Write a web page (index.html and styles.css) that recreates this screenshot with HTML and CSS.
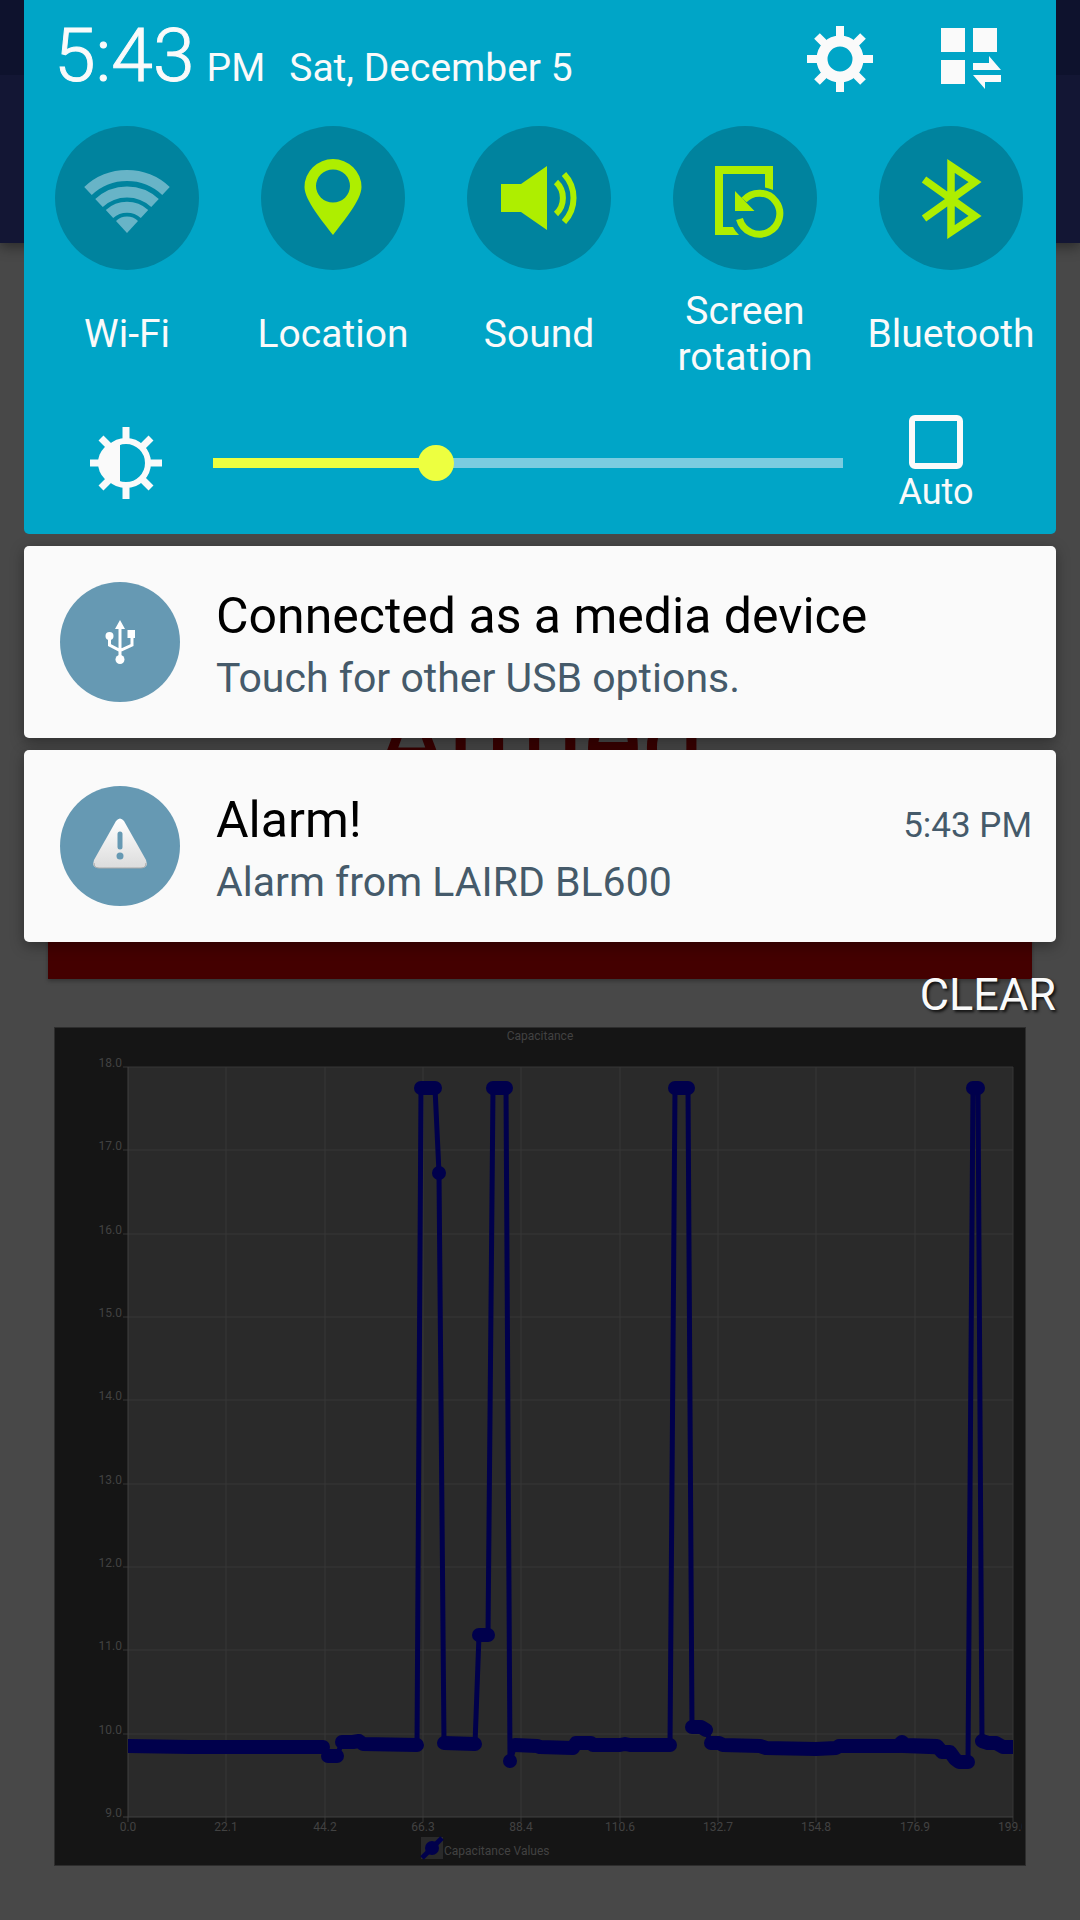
FILE: index.html
```html
<!DOCTYPE html>
<html lang="en">
<head>
<meta charset="utf-8">
<meta name="viewport" content="width=device-width, initial-scale=1">
<title>Capacitance Alarm</title>
<link rel="stylesheet" href="styles.css">
</head>
<body>
<div class="app">
  <header class="app-header">
    <div class="status-bar"></div>
    <div class="toolbar"></div>
  </header>
  <main class="app-main">
    <h1 class="alarm-state">Armed</h1>
    <button class="alarm-button" type="button" aria-label="Alarm"></button>
    <section class="chart">
      <svg class="chart-svg" viewBox="54 1027 972 839" role="img" aria-label="Capacitance">
        <defs>
          <clipPath id="plot-clip"><rect x="128" y="1067" width="885" height="750"/></clipPath>
          <clipPath id="label-clip"><rect x="54" y="1027" width="968" height="839"/></clipPath>
        </defs>
        <rect class="chart-frame" x="54" y="1027" width="972" height="839"/>
        <rect class="plot" x="128" y="1067" width="885" height="750"/>
        <path class="grid" d="M123 1067H1013M123 1150H1013M123 1234H1013M123 1317H1013M123 1400H1013M123 1484H1013M123 1567H1013M123 1650H1013M123 1734H1013M226 1067V1822M325 1067V1822M423 1067V1822M521 1067V1822M620 1067V1822M718 1067V1822M816 1067V1822M915 1067V1822M1013 1067V1822"/>
        <path class="axis" d="M128 1067V1822M123 1817H1013"/>
        <g clip-path="url(#plot-clip)">
          <path class="line" d="M128 1746L323 1747L328 1756L337 1756L342 1742L359 1741L363 1744L417 1745L421 1088L435 1088L439 1173L444 1743L475 1744L479 1635L488 1635L493 1088L506 1088L510 1761L515 1745L573 1748L576 1743L670 1745L675 1088L688 1088L692 1727L706 1730L711 1743L942 1752L968 1762L973 1088L978 1088L982 1741L1013 1747"/>
          <path class="points" d="M128 1746L190 1747H323M328 1756H337M342 1742H353L359 1741L363 1744L417 1745M421 1088H435M439 1173h0M444 1743L475 1744M479 1635H488M493 1088H506M510 1761h0M515 1745L537 1746L540 1747L573 1748L576 1743H591L593 1745H620L625 1744L630 1745H670M675 1088H688M692 1727H701L706 1730M711 1743H719L723 1745L760 1746L766 1748L816 1749L836 1748L839 1746H898L902 1742L905 1745L937 1746L942 1752H950L955 1759L959 1762H968M973 1088H978M982 1741L988 1743H996L1003 1747H1016"/>
        </g>
        <g class="labels y-labels">
          <text x="122" y="1067">18.0</text><text x="122" y="1150">17.0</text><text x="122" y="1234">16.0</text><text x="122" y="1317">15.0</text><text x="122" y="1400">14.0</text><text x="122" y="1484">13.0</text><text x="122" y="1567">12.0</text><text x="122" y="1650">11.0</text><text x="122" y="1734">10.0</text><text x="122" y="1817">9.0</text>
        </g>
        <g class="labels x-labels" clip-path="url(#label-clip)">
          <text x="128" y="1831">0.0</text><text x="226" y="1831">22.1</text><text x="325" y="1831">44.2</text><text x="423" y="1831">66.3</text><text x="521" y="1831">88.4</text><text x="620" y="1831">110.6</text><text x="718" y="1831">132.7</text><text x="816" y="1831">154.8</text><text x="915" y="1831">176.9</text><text x="1013" y="1831">199.0</text>
        </g>
        <text class="labels chart-title" x="540" y="1040">Capacitance</text>
        <rect class="plot" x="421" y="1837" width="22" height="22"/>
        <path class="line" d="M422 1858L442 1838"/>
        <path class="points" d="M432 1848h0"/>
        <text class="labels" x="444" y="1855">Capacitance Values</text>
      </svg>
    </section>
  </main>
</div>

<div class="shade">
  <section class="quick-panel">
    <div class="clock-row">
      <span class="time">5:43</span>
      <span class="meridiem">PM</span>
      <span class="date">Sat, December 5</span>
      <button class="icon-button" type="button" aria-label="Settings">
        <svg viewBox="-34 -34 68 68" width="68" height="68">
          <circle r="18" fill="none" stroke="currentColor" stroke-width="11"/>
          <path d="M0 -33V-20M0 33V20M-33 0H-20M33 0H20M-23 -23L-15 -15M23 -23L15 -15M-23 23L-15 15M23 23L15 15" stroke="currentColor" stroke-width="8"/>
        </svg>
      </button>
      <button class="icon-button" type="button" aria-label="Edit quick settings">
        <svg viewBox="0 0 62 68" width="62" height="68" fill="currentColor">
          <path d="M0 3h24v24H0zM32 3h24v24H32zM0 35h24v24H0zM32 38H48V31L60 45H32zM32 50H60V57H44V64z"/>
        </svg>
      </button>
    </div>

    <div class="toggles">
      <button class="toggle off" type="button">
        <svg class="disc" viewBox="-72 -72 144 144">
          <g fill="none" stroke="currentColor" stroke-width="11" transform="translate(0 35)">
            <path d="M-39 -42A57 57 0 0 1 39 -42"/>
            <path d="M-28 -30A41 41 0 0 1 28 -30"/>
            <path d="M-17.500 -19A26 26 0 0 1 17.500 -19"/>
            <path d="M0 0L-11 -12A16 16 0 0 1 11 -12Z" fill="currentColor" stroke="none"/>
          </g>
        </svg>
        <span class="toggle-label">Wi-Fi</span>
      </button>
      <button class="toggle" type="button">
        <svg class="disc" viewBox="-72 -72 144 144">
          <path fill="currentColor" fill-rule="evenodd" d="M0 37C-10 24 -28.500 2 -28.500 -11A28.500 28 0 0 1 28.500 -11C28.500 2 10 24 0 37ZM0 -28.500A17 16.500 0 0 0 0 4.500A17 16.500 0 0 0 0 -28.500Z"/>
        </svg>
        <span class="toggle-label">Location</span>
      </button>
      <button class="toggle" type="button">
        <svg class="disc" viewBox="-72 -72 144 144">
          <path fill="currentColor" d="M-38 -14H-18L8 -32V32L-18 14H-38Z"/>
          <path fill="none" stroke="currentColor" stroke-width="6" d="M17 -16A22 22 0 0 1 17 16M25 -24A35 35 0 0 1 25 24"/>
        </svg>
        <span class="toggle-label">Sound</span>
      </button>
      <button class="toggle" type="button">
        <svg class="disc" viewBox="-72 -72 144 144">
          <path fill="currentColor" d="M-30 -32H28V-8Q24 -10 20 -10.500V-24H-22V29H-12Q-10 33 -6 37H-30ZM-10 -7V13H9.500Z"/>
          <path fill="none" stroke="currentColor" stroke-width="7" d="M-5.500 21A20.500 20.500 0 1 0 -1 2"/>
        </svg>
        <span class="toggle-label">Screen rotation</span>
      </button>
      <button class="toggle" type="button">
        <svg class="disc" viewBox="-72 -72 144 144">
          <path fill="none" stroke="currentColor" stroke-width="7.500" stroke-miterlimit="6" d="M-27 -18.500L24 18L0 34V-32L24 -16L-27 20.500"/>
        </svg>
        <span class="toggle-label">Bluetooth</span>
      </button>
    </div>

    <div class="brightness">
      <svg class="brightness-icon" viewBox="-36 -36 72 72" width="72" height="72">
        <circle r="22" fill="none" stroke="currentColor" stroke-width="6"/>
        <path fill="currentColor" d="M-6 -22A22 22 0 0 0 -6 22Z"/>
        <path d="M0 -36V-24M0 36V24M-36 0H-24M36 0H24M-25 -25L-16 -16M25 -25L16 -16M-25 25L-16 16M25 25L16 16" stroke="currentColor" stroke-width="7"/>
      </svg>
      <input class="slider" type="range" min="0" max="255" value="88" aria-label="Brightness">
      <label class="auto"><input class="auto-box" type="checkbox">Auto</label>
    </div>
  </section>

  <article class="notice">
    <svg class="notice-icon" viewBox="-60 -60 120 120">
      <g fill="#fff">
        <path d="M0 -22L5 -13H-5ZM7.500 -12H15V-4H7.500Z"/>
        <circle cx="-10.500" cy="-6" r="4"/>
        <circle cy="17.500" r="4.500"/>
      </g>
      <path d="M0 -14V16M-10.500 -5V3L0 8.500L12 3V-5" fill="none" stroke="#fff" stroke-width="3"/>
    </svg>
    <div class="notice-body">
      <h2 class="notice-title">Connected as a media device</h2>
      <p class="notice-text">Touch for other USB options.</p>
    </div>
  </article>

  <article class="notice">
    <svg class="notice-icon" viewBox="-60 -60 120 120">
      <defs>
        <linearGradient id="sign" x1="0" y1="0" x2="0" y2="1">
          <stop offset="0" stop-color="#fff"/><stop offset="1" stop-color="#dcdcdc"/>
        </linearGradient>
      </defs>
      <path fill="url(#sign)" d="M-4 -25Q0 -30 4 -25L26 14Q29 22 21 22H-21Q-29 22 -26 14Z"/>
      <path d="M-26 17Q-26 22 -21 22H21Q26 22 26 17" fill="none" stroke="#aaa" stroke-width="1"/>
      <path d="M0 -12V1" stroke="#6699b3" stroke-width="5" stroke-linecap="round"/>
      <circle cy="10" r="3.500" fill="#6699b3"/>
    </svg>
    <div class="notice-body">
      <h2 class="notice-title">Alarm!</h2>
      <p class="notice-text">Alarm from LAIRD BL600</p>
    </div>
    <time class="notice-time">5:43 PM</time>
  </article>

  <button class="clear" type="button">CLEAR</button>
</div>
</body>
</html>
```
FILE: styles.css
```css
* {
  box-sizing: border-box;
}

body {
  margin: 0;
  background: #484848;
  font-family: Roboto, "Liberation Sans", sans-serif;
}

button {
  margin: 0;
  padding: 0;
  border: 0;
  background: none;
  color: inherit;
  font: inherit;
}

svg {
  display: block;
  flex: none;
}

/* Dimmed app behind the shade */
.app {
  position: relative;
  min-height: 100vh;
}

.app-header {
  box-shadow: 0 4px 12px rgba(0, 0, 0, 0.4);
}

.status-bar {
  height: 75px;
  background: #0e122d;
}

.toolbar {
  height: 168px;
  background: #131634;
}

.app-main {
  display: flex;
  flex-direction: column;
  padding: 434px 48px 54px;
}

.alarm-state {
  margin: 0;
  color: #3a0000;
  font-size: 111px;
  font-weight: 400;
  line-height: 124px;
  text-align: center;
}

.alarm-button {
  height: 136px;
  margin-top: 42px;
  background: #440000;
  box-shadow: 0 2px 4px rgba(0, 0, 0, 0.3);
}

.chart {
  margin: 48px 6px 0;
}

.chart-svg {
  width: 100%;
}

.chart-frame {
  fill: #151515;
  stroke: #2d2d2d;
  stroke-width: 2px;
}

.plot {
  fill: #2a2a2a;
}

.grid {
  stroke: #363636;
  stroke-width: 1px;
}

.axis {
  stroke: #404040;
  stroke-width: 1px;
}

.line,
.points {
  fill: none;
  stroke: #00004c;
  stroke-width: 5px;
  stroke-linejoin: round;
}

.points {
  stroke-width: 14px;
  stroke-linecap: round;
}

.labels {
  fill: #424242;
  font-size: 12px;
}

.y-labels {
  text-anchor: end;
}

.x-labels,
.chart-title {
  text-anchor: middle;
}

/* Notification shade */
.shade {
  position: absolute;
  top: 0;
  left: 0;
  right: 0;
  display: flex;
  flex-direction: column;
  gap: 12px;
  padding: 0 24px;
}

.quick-panel {
  padding-bottom: 23px;
  border-radius: 0 0 5px 5px;
  background: #00a5c7;
  color: #fafafa;
}

.clock-row {
  display: flex;
  align-items: baseline;
  height: 126px;
  padding: 11px 53px 0 30px;
}

.time {
  font-size: 75px;
  font-weight: 300;
  line-height: 88px;
  -webkit-text-stroke: 1px currentColor;
}

.meridiem {
  margin-left: 12px;
  font-size: 39px;
}

.date {
  margin-right: auto;
  margin-left: 24px;
  font-size: 39px;
}

.icon-button {
  align-self: flex-start;
  margin-top: 14px;
}

.icon-button + .icon-button {
  margin-left: 67px;
}

.toggles {
  display: grid;
  grid-template-columns: repeat(5, 1fr);
  padding-right: 2px;
}

.toggle {
  display: flex;
  flex-direction: column;
  align-items: center;
  color: #aeee00;
}

.toggle.off {
  color: #68b4c7;
}

.disc {
  width: 144px;
  height: 144px;
  border-radius: 50%;
  background: #00839e;
}

.toggle-label {
  display: flex;
  align-items: center;
  justify-content: center;
  width: 170px;
  height: 92px;
  margin-top: 18px;
  color: #fafafa;
  font-size: 39px;
  line-height: 46px;
}

.brightness {
  display: flex;
  align-items: center;
  height: 96px;
  margin-top: 35px;
  padding: 0 80px 0 66px;
}

.brightness-icon {
  margin-right: 51px;
}

.slider {
  flex: 1;
  min-width: 0;
  height: 36px;
  margin: 0;
  appearance: none;
  background: linear-gradient(to right, #edff40 35%, #7acce0 35%) center / 100% 10px no-repeat;
}

.slider::-webkit-slider-thumb {
  width: 36px;
  height: 36px;
  border-radius: 50%;
  appearance: none;
  background: #edff40;
}

.auto {
  display: flex;
  flex-direction: column;
  align-items: center;
  width: 80px;
  margin-left: 53px;
  padding-top: 2px;
  font-size: 36px;
  line-height: 42px;
}

.auto-box {
  width: 54px;
  height: 54px;
  margin: 0 0 2px;
  border: 6px solid #fafafa;
  border-radius: 6px;
  appearance: none;
}

.notice {
  display: flex;
  align-items: center;
  height: 192px;
  padding: 0 24px 0 36px;
  border-radius: 5px;
  background: #fafafa;
  box-shadow: 0 4px 14px rgba(0, 0, 0, 0.35);
}

.notice-icon {
  width: 120px;
  height: 120px;
  border-radius: 50%;
  background: #6699b3;
}

.notice-body {
  flex: 1;
  margin-left: 36px;
  padding-top: 8px;
}

.notice-title,
.notice-text {
  margin: 0;
  font-weight: 400;
}

.notice-title {
  color: #000;
  font-size: 50px;
  line-height: 64px;
}

.notice-text {
  color: #455a6a;
  font-size: 41px;
  line-height: 60px;
}

.notice-time {
  align-self: flex-start;
  margin-top: 54px;
  color: #455a6a;
  font-size: 35px;
  line-height: 44px;
}

.clear {
  align-self: flex-end;
  margin-top: 14px;
  color: #fafafa;
  font-size: 45px;
  line-height: 54px;
  text-shadow: 2px 2px 3px rgba(0, 0, 0, 0.8);
}
```
